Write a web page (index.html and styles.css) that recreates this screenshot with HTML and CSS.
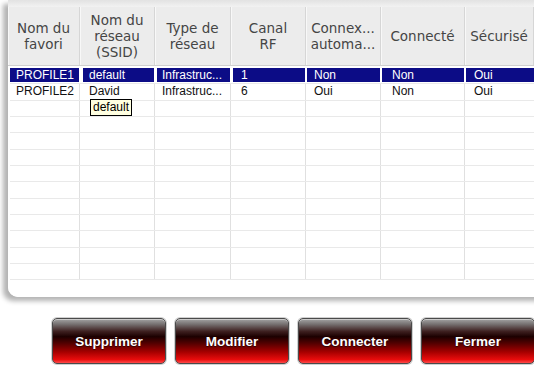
FILE: index.html
```html
<!DOCTYPE html>
<html>
<head>
<meta charset="utf-8">
<title>Profils</title>
<link rel="stylesheet" href="styles.css">
</head>
<body>
<div class="panel">
  <div class="grid">
    <div class="head">
      <div class="th">Nom du<br>favori</div>
      <div class="th">Nom du<br>réseau<br>(SSID)</div>
      <div class="th">Type de<br>réseau</div>
      <div class="th">Canal<br>RF</div>
      <div class="th">Connex...<br>automa...</div>
      <div class="th">Connecté</div>
      <div class="th">Sécurisé</div>
      <div class="th"></div>
    </div>
    <div class="body">
      <div class="row sel">
        <div class="td"><span>PROFILE1</span></div>
        <div class="td"><span>default</span></div>
        <div class="td"><span>Infrastruc...</span></div>
        <div class="td"><span>1</span></div>
        <div class="td"><span>Non</span></div>
        <div class="td"><span>Non</span></div>
        <div class="td"><span>Oui</span></div>
      </div>
      <div class="row">
        <div class="td"><span>PROFILE2</span></div>
        <div class="td"><span>David</span></div>
        <div class="td"><span>Infrastruc...</span></div>
        <div class="td"><span>6</span></div>
        <div class="td"><span>Oui</span></div>
        <div class="td"><span>Non</span></div>
        <div class="td"><span>Oui</span></div>
      </div>
      <div class="row"><div class="td"></div><div class="td"></div><div class="td"></div><div class="td"></div><div class="td"></div><div class="td"></div><div class="td"></div></div>
      <div class="row"><div class="td"></div><div class="td"></div><div class="td"></div><div class="td"></div><div class="td"></div><div class="td"></div><div class="td"></div></div>
      <div class="row"><div class="td"></div><div class="td"></div><div class="td"></div><div class="td"></div><div class="td"></div><div class="td"></div><div class="td"></div></div>
      <div class="row"><div class="td"></div><div class="td"></div><div class="td"></div><div class="td"></div><div class="td"></div><div class="td"></div><div class="td"></div></div>
      <div class="row"><div class="td"></div><div class="td"></div><div class="td"></div><div class="td"></div><div class="td"></div><div class="td"></div><div class="td"></div></div>
      <div class="row"><div class="td"></div><div class="td"></div><div class="td"></div><div class="td"></div><div class="td"></div><div class="td"></div><div class="td"></div></div>
      <div class="row"><div class="td"></div><div class="td"></div><div class="td"></div><div class="td"></div><div class="td"></div><div class="td"></div><div class="td"></div></div>
      <div class="row"><div class="td"></div><div class="td"></div><div class="td"></div><div class="td"></div><div class="td"></div><div class="td"></div><div class="td"></div></div>
      <div class="row"><div class="td"></div><div class="td"></div><div class="td"></div><div class="td"></div><div class="td"></div><div class="td"></div><div class="td"></div></div>
      <div class="row"><div class="td"></div><div class="td"></div><div class="td"></div><div class="td"></div><div class="td"></div><div class="td"></div><div class="td"></div></div>
      <div class="row"><div class="td"></div><div class="td"></div><div class="td"></div><div class="td"></div><div class="td"></div><div class="td"></div><div class="td"></div></div>
    </div>
  </div>
  <div class="tooltip">default</div>
</div>

<div class="buttons">
  <button class="btn">Supprimer</button>
  <button class="btn">Modifier</button>
  <button class="btn">Connecter</button>
  <button class="btn">Fermer</button>
</div>
</body>
</html>
```
FILE: styles.css
```css
html, body {
  margin: 0;
  padding: 0;
  background: white;
  width: 534px;
  height: 371px;
  overflow: hidden;
}

.panel {
  position: relative;
  margin-left: 8px;
  width: 540px;
  height: 290px;
  padding-top: 7px;
  background: linear-gradient(#e2e2e2, #f2f2f2 7px, white 7px);
  border-bottom-left-radius: 10px;
  box-shadow: -5px 4px 5px rgba(0, 0, 0, 0.3);
}

.head, .row {
  display: grid;
  grid-template-columns: 72px 75px 76px 75px 75px 84px 69px 14px;
}

.head {
  height: 58px;
  background: #ececec;
  border-bottom: 1px solid #cfcfcf;
}

.th {
  display: flex;
  align-items: center;
  justify-content: center;
  text-align: center;
  font-family: "DejaVu Sans", Verdana, sans-serif;
  font-size: 13.5px;
  line-height: 16px;
  color: #454545;
  white-space: nowrap;
  border-right: 1px solid #d6d6d6;
  box-shadow: inset 1px 0 0 #f8f8f8;
}

.body {
  padding-top: 2px;
  padding-left: 2px;
}

.row {
  height: 16.33px;
  box-sizing: border-box;
  border-bottom: 1px solid #e9e9e9;
  grid-template-columns: 70px 75px 76px 75px 75px 84px 83px;
}

.td {
  border-right: 1px solid #e0e0e0;
  font-family: "Liberation Sans", Arial, sans-serif;
  font-size: 12px;
  line-height: 14px;
  color: #111;
  white-space: nowrap;
}

.td span {
  display: block;
  height: 14px;
  padding-left: 6px;
}

.td:nth-child(2) span { padding-left: 6px; margin-left: 3px; }
.td:nth-child(3) span { padding-left: 5px; margin-left: 2px; }
.td:nth-child(4) span { padding-left: 8px; margin-left: 2px; }
.td:nth-child(5) span { padding-left: 7px; margin-left: 1px; }
.td:nth-child(6) span { padding-left: 10px; margin-left: 1px; }
.td:nth-child(7) span { padding-left: 8px; margin-left: 1px; }

.row.sel .td {
  border-right-color: #ffffff;
}

.row.sel .td span {
  background: #0c0c86;
  color: white;
}

.tooltip {
  position: absolute;
  left: 82px;
  top: 99px;
  height: 15px;
  padding: 0 2px;
  border: 1px solid #000;
  background: #ffffe1;
  font-family: "Liberation Sans", Arial, sans-serif;
  font-size: 12px;
  line-height: 15px;
  color: #000;
}

.buttons {
  display: flex;
  gap: 9px;
  margin-top: 21px;
  padding-left: 52px;
}

.btn {
  flex: none;
  width: 114px;
  height: 46px;
  padding: 0;
  border: 1px solid #4a4a4a;
  border-radius: 5px;
  background: linear-gradient(to bottom, #a4a4a4 0%, #757070 12%, #3e2020 28%, #1c0000 40%, #520000 55%, #a60000 75%, #e80c0c 92%, #ff4a4a 100%);
  box-shadow: 0 0 0 1px #d0d0d0, inset 0 1px 0 rgba(255, 255, 255, 0.45);
  font-family: "Liberation Sans", Arial, sans-serif;
  font-weight: bold;
  font-size: 13.5px;
  color: white;
  text-shadow: 0 1px 1px rgba(0, 0, 0, 0.6);
}
```
